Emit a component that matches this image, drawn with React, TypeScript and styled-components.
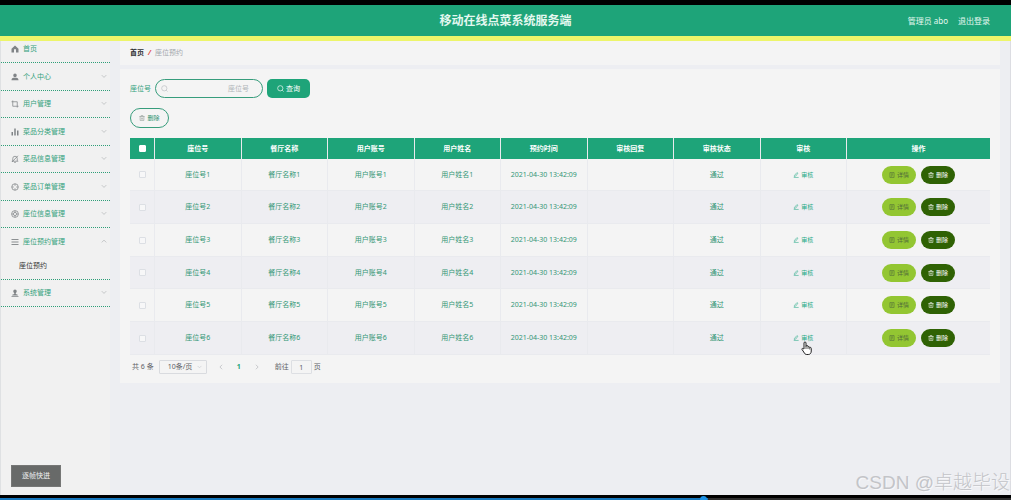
import React from "react";
import styled, { createGlobalStyle, css } from "styled-components";

const GlobalStyle = createGlobalStyle`
  *, *::before, *::after { box-sizing: border-box; }
  body {
    margin: 0;
    background: #edeef2;
    color: #606266;
    font: 7px/12px "Noto Sans", "Noto Sans CJK SC", sans-serif;
  }
  button, input, select { font: inherit; color: inherit; margin: 0; padding: 0; }
  button { cursor: pointer; }
  a { color: inherit; text-decoration: none; }
`;

const Page = styled.div`
  position: relative;
  display: flex;
  flex-direction: column;
  min-height: 100vh;
  border-top: 5px solid #000;
`;

const Header = styled.header`
  display: grid;
  grid-template-columns: 1fr auto 1fr;
  align-items: center;
  height: 36px;
  padding: 0 21px;
  background: #1ea479;
  border-bottom: 5px solid #edf56a;
  color: #e4f8f0;
`;

const Title = styled.h1`
  grid-column: 2;
  margin: 0;
  font-size: 12px;
  line-height: 20px;
  font-weight: 700;
`;

const UserBar = styled.div`
  display: flex;
  justify-content: flex-end;
  gap: 10px;
  font-size: 8px;
`;

const Body = styled.div`
  display: flex;
  flex: 1;
`;

const Sidebar = styled.nav`
  flex: none;
  width: 110px;
  background: #f1f1f1;
  border-left: 1px solid #dfe1e3;
`;

const Menu = styled.ul`
  margin: 0;
  padding: 0;
  list-style: none;
`;

const MenuItem = styled.li`
  border-bottom: 1px dotted #2f9f78;
  &:first-child { padding-bottom: 5px; }
  &:first-child > a { height: 16px; }
  &:nth-child(odd):not(:first-child) > a:first-child { height: 26px; }
`;

const MenuLink = styled.a`
  display: flex;
  align-items: center;
  gap: 4px;
  height: 27px;
  padding: 0 3px 0 10px;
  color: #33a17c;
  & > svg { color: #808487; }
  & > svg:last-child:not(:first-child) { margin-left: auto; color: #a3a6a8; }
`;

const SubLink = styled.a`
  display: block;
  height: 24px;
  padding: 5px 0 0 18px;
  color: #333;
`;

const Main = styled.main`
  flex: 1;
  min-width: 0;
  padding: 0 10px 24px;
  border-right: 1px solid #dcdde2;
`;

const Breadcrumb = styled.nav`
  display: flex;
  align-items: center;
  gap: 4px;
  height: 24px;
  margin-bottom: 4px;
  padding: 0 10px;
  background: #f4f4f4;
  color: #a2a7ad;
  a { color: #303133; font-weight: 700; }
  i { color: #e04545; font-weight: 700; }
`;

const Card = styled.section`
  padding: 10px 10px 9px;
  background: #f4f4f4;
`;

const SearchRow = styled.form`
  display: flex;
  align-items: center;
  gap: 4px;
  color: #33a17c;
`;

const SearchField = styled.div`
  display: flex;
  align-items: center;
  width: 108px;
  height: 19px;
  padding: 0 13px 0 5px;
  border: 1px solid #379d7c;
  border-radius: 10px;
  color: #b8bcc1;
`;

const SearchInput = styled.input`
  flex: 1;
  min-width: 0;
  border: 0;
  outline: 0;
  background: transparent;
  text-align: right;
  &::placeholder { color: #b0b4b9; opacity: 1; }
`;

const tones = {
  search: css`width: 43px; height: 19px; background: #1ea479; color: #fff; border-radius: 5px;`,
  outline: css`width: 39px; height: 20px; background: transparent; color: #2f9270; border: 1px solid #379d7c; font-size: 6px; svg { color: #8b9591; }`,
  detail: css`width: 34px; height: 18px; background: #93c632; color: #4f6a3a; font-size: 6px;`,
  remove: css`width: 34px; height: 18px; background: #2f6204; color: #fff; font-size: 6px;`,
  text: css`height: 12px; background: transparent; color: #27aa87; font-size: 6px;`,
};

const Button = styled.button<{ $tone: keyof typeof tones }>`
  display: inline-flex;
  align-items: center;
  justify-content: center;
  gap: 2px;
  border: 0;
  border-radius: 10px;
  white-space: nowrap;
  ${(p) => tones[p.$tone]}
`;

const Toolbar = styled.div`
  margin: 10px 0;
  display: flex;
`;

const Table = styled.table`
  width: 100%;
  table-layout: fixed;
  border-collapse: separate;
  border-spacing: 0;
  text-align: center;
  color: #339675;
  th, td {
    padding: 0;
    border-right: 1px solid #e9eaee;
  }
  th {
    height: 21px;
    background: #1ea479;
    color: #fff;
    font-weight: 700;
  }
  th:last-child, td:last-child { border-right: 0; }
  td { height: 33px; border-bottom: 1px solid #e9eaee; }
  tbody tr:nth-child(3n + 1) td { height: 32px; }
  tbody tr:nth-child(even) { background: #eeeef2; }
`;

const CheckCol = styled.col`
  width: 25px;
`;

const ActionCol = styled.col`
  width: 143px;
`;

const Check = styled.input<{ $head?: boolean }>`
  appearance: none;
  display: block;
  width: 7px;
  height: 7px;
  margin: 0 auto;
  border: 1px solid ${(p) => (p.$head ? "#fff" : "#dcdfe4")};
  border-radius: 1px;
  background: ${(p) => (p.$head ? "#fff" : "#f7f7f8")};
`;

const Actions = styled.div`
  display: flex;
  justify-content: center;
  gap: 5px;
`;

const ReviewCell = styled.div`
  position: relative;
  display: flex;
  justify-content: center;
`;

const Pointer = styled.svg`
  position: absolute;
  top: 9px;
  left: calc(50% - 2px);
  width: 11px;
  height: 14px;
`;

const Pager = styled.div`
  display: flex;
  align-items: center;
  margin-top: 5px;
  padding-left: 2px;
`;

const SizeBox = styled.div`
  display: flex;
  align-items: center;
  width: 48px;
  height: 14px;
  margin: 0 5px;
  padding: 0 4px 0 8px;
  border: 1px solid #d9dbdf;
  border-radius: 1px;
  color: #606266;
  svg { color: #b9bcc2; }
`;

const SizeSelect = styled.select`
  flex: 1;
  min-width: 0;
  appearance: none;
  border: 0;
  background: transparent;
`;

const PageButton = styled.button<{ $current?: boolean }>`
  display: grid;
  place-items: center;
  width: 18px;
  height: 14px;
  border: 0;
  background: transparent;
  color: ${(p) => (p.$current ? "#1ea479" : "#a5a8ad")};
  font-weight: 700;
`;

const Jump = styled.label`
  display: flex;
  align-items: center;
  gap: 2px;
  margin-left: 9px;
`;

const JumpInput = styled.input`
  width: 21px;
  height: 14px;
  border: 1px solid #dddfe3;
  border-radius: 1px;
  background: transparent;
  text-align: center;
`;

const StepButton = styled.button`
  position: absolute;
  left: 11px;
  bottom: 13px;
  width: 50px;
  height: 22px;
  border: 1px solid #767776;
  background: #686a69;
  color: #f1f1f1;
`;

const Watermark = styled.div`
  position: absolute;
  right: 1px;
  bottom: 4px;
  font: 19px/26px "Liberation Sans", "Noto Sans CJK SC", sans-serif;
  font-weight: 300;
  color: #c3c4c8;
  text-shadow: 1px 1px 0 #f8f8fa;
  white-space: nowrap;
  pointer-events: none;
`;

const Player = styled.div`
  position: relative;
  height: 5px;
  padding-top: 3px;
  background: #000;
`;

const Track = styled.div`
  height: 2px;
  background: #2e2e2e;
`;

const Progress = styled.div`
  position: relative;
  width: 70%;
  height: 2px;
  background: #1777bd;
  &::after {
    content: "";
    position: absolute;
    right: 1px;
    top: -2px;
    width: 7px;
    height: 4px;
    border-radius: 4px 4px 0 0;
    background: #1d92e6;
  }
`;

const IconSvg = styled.svg<{ $size: number }>`
  flex: none;
  display: block;
  width: ${(p) => p.$size}px;
  height: ${(p) => p.$size}px;
`;

const shapes = {
  home: <path fill="currentColor" stroke="none" d="M8 1 1 7.5V15h5v-5a2 2 0 0 1 4 0v5h5V7.5z" />,
  user: <path fill="currentColor" stroke="none" d="M8 1a3.5 3.5 0 0 1 3.5 3.5C11.500 7 10 8.500 8 8.500S4.500 7 4.500 4.500A3.500 3.500 0 0 1 8 1zM1 14.500c0-3 1.500-5 4-5h6c2.500 0 4 2 4 5z" />,
  crop: <path d="M3.500 1v11.500H15M1 3.500h11.500V15" />,
  bars: <path fill="currentColor" stroke="none" d="M1 8h3v7H1zM6.500 1h3v14h-3zM12 5h3v10h-3z" />,
  mute: <path d="M3.500 12V7a4.500 4.500 0 0 1 9 0v5M1.500 12.500h13M6.500 15h3M14 1.500 2 14" />,
  target: (
    <>
      <circle cx="8" cy="8" r="6.500" />
      <path d="M8 1.500v4M8 10.500v4M1.500 8h4M10.500 8h4" />
    </>
  ),
  help: (
    <>
      <circle cx="8" cy="8" r="6.800" />
      <circle cx="8" cy="8" r="3.200" />
      <path d="M8 1.500v3M8 11.500v3M1.500 8h3M11.500 8h3" />
    </>
  ),
  list: <path d="M1 3h14M1 8h14M1 13h14" strokeWidth="1.800" />,
  admin: <path fill="currentColor" stroke="none" d="M8 1a3.500 3.500 0 0 1 3.500 3.500c0 1.500-.8 3-2 4V10l4 1.500V13h-11v-1.500l4-1.500V8.500c-1.200-1-2-2.500-2-4A3.500 3.500 0 0 1 8 1zM1 14h14v1.500H1z" />,
  down: <path d="m2 3 6 6 6-6" />,
  up: <path d="m2 9 6-6 6 6" />,
  left: <path d="m11 2-6 6 6 6" />,
  right: <path d="m5 2 6 6-6 6" />,
  search: (
    <>
      <circle cx="7.500" cy="7.500" r="6" />
      <path d="m12 12 3 3" />
    </>
  ),
  trash: <path d="M1 4h14M5.500 4V1.500h5V4M3 4v10.500h10V4M6.500 7v5M9.500 7v5" />,
  doc: <path d="M2.500 1.500h11v13h-11zM5.500 5h5M5.500 8h5M5.500 11h3" />,
  edit: <path d="m4 9 6.500-7.500 2.500 2L7 11l-3.500 1zM2 14.500h13" />,
};

type IconName = keyof typeof shapes;

function Icon({ name, size = 8 }: { name: IconName; size?: number }) {
  return (
    <IconSvg
      $size={size}
      viewBox="0 0 16 16"
      fill="none"
      stroke="currentColor"
      strokeWidth="1.500"
      aria-hidden="true"
    >
      {shapes[name]}
    </IconSvg>
  );
}

const menu: { icon: IconName; label: string; child?: string }[] = [
  { icon: "home", label: "首页" },
  { icon: "user", label: "个人中心" },
  { icon: "crop", label: "用户管理" },
  { icon: "bars", label: "菜品分类管理" },
  { icon: "mute", label: "菜品信息管理" },
  { icon: "target", label: "菜品订单管理" },
  { icon: "help", label: "座位信息管理" },
  { icon: "list", label: "座位预约管理", child: "座位预约" },
  { icon: "admin", label: "系统管理" },
];

const columns = ["座位号", "餐厅名称", "用户账号", "用户姓名", "预约时间", "审核回复", "审核状态", "审核"];
const rows = [1, 2, 3, 4, 5, 6];

export default function App() {
  return (
    <>
      <GlobalStyle />
      <Page>
        <Header>
          <Title>移动在线点菜系统服务端</Title>
          <UserBar>
            <span>管理员 abo</span>
            <a href="#logout">退出登录</a>
          </UserBar>
        </Header>
        <Body>
          <Sidebar>
            <Menu>
              {menu.map((m, i) => (
                <MenuItem key={m.label}>
                  <MenuLink href="#menu">
                    <Icon name={m.icon} />
                    {m.label}
                    {i > 0 && <Icon name={m.child ? "up" : "down"} size={6} />}
                  </MenuLink>
                  {m.child && <SubLink href="#seats">{m.child}</SubLink>}
                </MenuItem>
              ))}
            </Menu>
          </Sidebar>
          <Main>
            <Breadcrumb>
              <a href="#home">首页</a>
              <i>/</i>
              <span>座位预约</span>
            </Breadcrumb>
            <Card>
              <SearchRow onSubmit={(e) => e.preventDefault()}>
                <label htmlFor="seat">座位号</label>
                <SearchField>
                  <Icon name="search" size={7} />
                  <SearchInput id="seat" placeholder="座位号" />
                </SearchField>
                <Button $tone="search">
                  <Icon name="search" size={7} />
                  查询
                </Button>
              </SearchRow>
              <Toolbar>
                <Button $tone="outline">
                  <Icon name="trash" size={6} />
                  删除
                </Button>
              </Toolbar>
              <Table>
                <colgroup>
                  <CheckCol />
                  {columns.map((c) => (
                    <col key={c} />
                  ))}
                  <ActionCol />
                </colgroup>
                <thead>
                  <tr>
                    <th>
                      <Check type="checkbox" $head aria-label="全选" />
                    </th>
                    {columns.map((c) => (
                      <th key={c}>{c}</th>
                    ))}
                    <th>操作</th>
                  </tr>
                </thead>
                <tbody>
                  {rows.map((n) => (
                    <tr key={n}>
                      <td>
                        <Check type="checkbox" aria-label={`座位号${n}`} />
                      </td>
                      <td>座位号{n}</td>
                      <td>餐厅名称{n}</td>
                      <td>用户账号{n}</td>
                      <td>用户姓名{n}</td>
                      <td>2021-04-30 13:42:09</td>
                      <td />
                      <td>通过</td>
                      <td>
                        <ReviewCell>
                          <Button $tone="text">
                            <Icon name="edit" size={6} />
                            审核
                          </Button>
                          {n === 6 && (
                            <Pointer viewBox="0 0 22 28" aria-hidden="true">
                              <path
                                d="M6 16V4a2 2 0 0 1 4 0v7a2 2 0 0 1 4 0v1a2 2 0 0 1 3.500 1 2 2 0 0 1 3 2v5c0 4-2 7-6 7h-3c-3 0-4.500-2-6-5l-3.500-5c-1-2 1.500-3 3-1.500z"
                                fill="#fff"
                                stroke="#222"
                                strokeWidth="2"
                              />
                              <path d="M10 11v5M14 12v4M17.500 13v4" stroke="#222" strokeWidth="1.500" />
                            </Pointer>
                          )}
                        </ReviewCell>
                      </td>
                      <td>
                        <Actions>
                          <Button $tone="detail">
                            <Icon name="doc" size={6} />
                            详情
                          </Button>
                          <Button $tone="remove">
                            <Icon name="trash" size={6} />
                            删除
                          </Button>
                        </Actions>
                      </td>
                    </tr>
                  ))}
                </tbody>
              </Table>
              <Pager>
                <span>共 6 条</span>
                <SizeBox>
                  <SizeSelect aria-label="每页条数">
                    <option>10条/页</option>
                  </SizeSelect>
                  <Icon name="down" size={5} />
                </SizeBox>
                <PageButton aria-label="上一页">
                  <Icon name="left" size={6} />
                </PageButton>
                <PageButton $current>1</PageButton>
                <PageButton aria-label="下一页">
                  <Icon name="right" size={6} />
                </PageButton>
                <Jump>
                  前往
                  <JumpInput defaultValue="1" />
                  页
                </Jump>
              </Pager>
            </Card>
          </Main>
        </Body>
        <StepButton>逐帧快进</StepButton>
        <Watermark>CSDN @卓越毕设</Watermark>
        <Player>
          <Track>
            <Progress />
          </Track>
        </Player>
      </Page>
    </>
  );
}
